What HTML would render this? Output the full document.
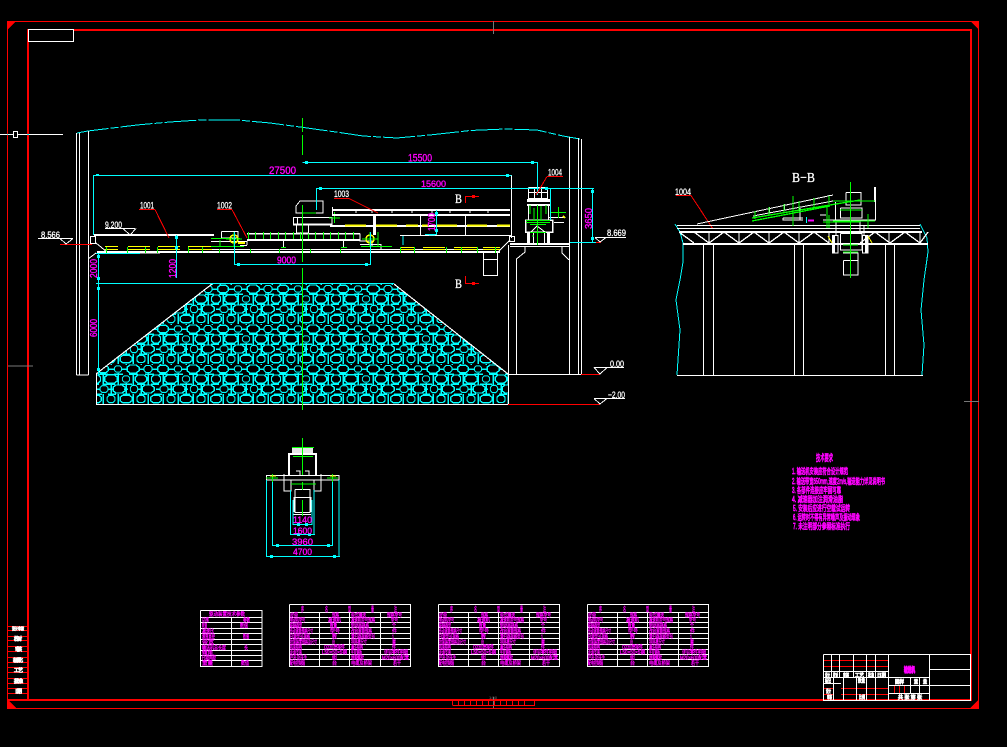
<!DOCTYPE html>
<html lang="zh"><head><meta charset="utf-8"><title>CAD</title>
<style>
html,body{margin:0;padding:0;background:#000;width:1007px;height:747px;overflow:hidden}
svg{display:block}
text{font-family:"Liberation Sans","Noto Sans CJK SC",sans-serif}
.w{stroke:#fff;fill:none}.c{stroke:#0ff;fill:none}.g{stroke:#0f0;fill:none}.y{stroke:#ff0;fill:none}.r{stroke:#f00;fill:none}
.m text,text.m{fill:#f0f;stroke:#f0f;stroke-width:.35}
.t text,text.t{fill:#fff;stroke:#fff;stroke-width:.3}
.cn text{fill:#f0f;stroke:#f0f;stroke-width:.3;font-size:5.5px}
.no text{fill:#f0f;stroke:#f0f;stroke-width:.75;font-size:8px}
.bl text{fill:#fff;stroke:#fff;stroke-width:.8;font-size:5px}
</style></head><body>
<svg width="1007" height="747" viewBox="0 0 1007 747" xmlns="http://www.w3.org/2000/svg" shape-rendering="crispEdges">
<defs>
<polygon id="o" points="-3,-4.5 3,-4.5 6,-2 6,2 3,4.5 -3,4.5 -6,2 -6,-2"/>
<pattern id="rock" x="96" y="284" width="60" height="40" patternUnits="userSpaceOnUse">
<rect width="60" height="40" fill="#000"/>
<g fill="none" stroke="#0ff" stroke-width="1.5">
<use href="#o" transform="translate(7,5) scale(.9,.85)"/><use href="#o" transform="translate(22,5) scale(.6,.7)"/>
<use href="#o" transform="translate(37,5) scale(1,.9)"/><use href="#o" transform="translate(52,5) scale(.7,.75)"/>
<use href="#o" transform="translate(0,15) scale(.75,.9)"/><use href="#o" transform="translate(60,15) scale(.75,.9)"/>
<use href="#o" transform="translate(15,15) scale(1.05,.95)"/><use href="#o" transform="translate(30,15) scale(.6,.7)"/>
<use href="#o" transform="translate(45,15) scale(.95,.9)"/>
<use href="#o" transform="translate(8,25) scale(.65,.75)"/><use href="#o" transform="translate(23,25) scale(1,.9)"/>
<use href="#o" transform="translate(38,25) scale(.6,.8)"/><use href="#o" transform="translate(52,25) scale(1,.9)"/>
<use href="#o" transform="translate(0,35) scale(.9,.85)"/><use href="#o" transform="translate(60,35) scale(.9,.85)"/>
<use href="#o" transform="translate(15,35) scale(.65,.8)"/><use href="#o" transform="translate(30,35) scale(1,.85)"/>
<use href="#o" transform="translate(45,35) scale(.7,.8)"/>
<path d="M0 5H2M12 5H19M25 5H31M44 5H48M56 5H60M3 10H12M18 10H27M33 10H42M49 10H58M8 20H19M24 20H36M41 20H49M55 20H60M0 20H3M0 30H6M12 30H20M27 30H34M43 30H51M58 30H60M7 10V21M22 9V21M37 10V21M52 9V21M15 20V30M30 19V31M45 20V30M0 25H4M12 25H18M28 25H32M42 25H47M7 30V40M22 30V40M37 30V40M52 30V40M15 0V1M30 0V1M45 0V1M4 0V1M56 0V1"/>
</g>
</pattern>
<clipPath id="pile"><polygon points="96,374 212,284 394,284 508,374 508,404 96,404"/></clipPath>
</defs>
<rect width="1007" height="747" fill="#000"/>

<!-- frame -->
<g fill="#f00" stroke="none">
<rect x="7" y="21" width="971" height="1"/><rect x="7" y="21" width="1" height="687"/><rect x="7" y="708" width="971" height="1"/><rect x="978" y="21" width="1" height="688"/>
<rect x="27" y="29" width="2" height="672"/><rect x="27" y="29" width="944" height="2"/><rect x="970" y="29" width="2" height="672"/><rect x="8" y="699" width="964" height="2"/>
<polygon points="7,21 16,21 7,30"/><polygon points="979,21 970,21 979,30"/><polygon points="7,708 7,699 16,708"/><polygon points="979,708 979,699 970,708"/>
</g>
<path class="w" style="stroke:#777" d="M493.5 21V34M8 366H33M964 401.5H979M493.5 697V708"/>
<rect x="28.5" y="29.5" width="45" height="12" stroke="#fff" fill="#000"/>
<path class="w" d="M0 134.5H63"/><rect x="13.5" y="131.5" width="4" height="6" stroke="#fff" fill="#000"/>
<path d="M7 134.5h1M27 134.5h2" class="c"/>
<path d="M452.5 700.5H535M452.5 705.5H535M452.5 700V705M458.5 700V705M464.5 700V705M470.5 700V705M476.5 700V705M482.5 700V705M488.5 700V705M494.5 700V705M500.5 700V705M506.5 700V705M512.5 700V705M518.5 700V705M524.5 700V705M534.5 700V705" class="r"/>

<!-- left strip -->
<path class="r" d="M8 626.5H27M8 630.5H27M8 636.5H27M8 640.5H27M8 646.5H27M8 651.5H27M8 657.5H27M8 662.5H27M8 667.5H27M8 672.5H27M8 678.5H27M8 683.5H27M8 688.5H27M8 693.5H27"/>
<g class="bl">
<text x="12" y="630" textLength="12" lengthAdjust="spacingAndGlyphs" style="font-size:4px">设计审核</text>
<text x="14" y="640.5" textLength="8" style="font-size:5px">校对</text>
<text x="15" y="651" textLength="7" style="font-size:5px">审核</text>
<text x="13" y="662" textLength="10" style="font-size:5px">标准化</text>
<text x="14" y="672" textLength="9" style="font-size:5px">工艺</text>
<text x="14" y="683" textLength="9" style="font-size:5px">批准</text>
<text x="15" y="693" textLength="7" style="font-size:5px">日期</text>
</g>

<!-- rock pile -->
<rect x="96" y="284" width="412" height="120" fill="url(#rock)" clip-path="url(#pile)"/>
<path class="w" d="M96 374L212 284M394 284L508 374M96 404.5H508M96.5 374V404" stroke-width="1.2"/>
<path class="c" d="M212 283.5H394"/>

<!-- building cyan wave -->
<path class="c" d="M77 133L88 131L137 125L170 122L200 120L237 120L270 123L300 127L343 133L363 136L397 138L430 135L470 130.5L505 129L537 130L563 136L580 139" stroke-width="1" stroke-dasharray="32 2 8 2"/>

<!-- building white -->
<path class="w" d="M76.5 133V375M79.5 133V375M88.5 131V375M76.5 375H88.5M569.5 137V375M578.5 138V375M581.5 139V375M508.5 245V404M508 374.5H582M525 246V252L516.5 259V374M562 246V253L569 260"/>
<rect x="510" y="243" width="60" height="2" fill="#fff"/><rect x="510" y="246" width="60" height="1" fill="#fff"/>
<path class="w" d="M483.5 253V275.5H497.5V253M483.5 259.5H497.5M497 253L510 240M96 243L107 252M96 253L88 259"/>
<rect x="509.5" y="236.5" width="5" height="5" class="w"/><rect x="90.5" y="236.5" width="5" height="7" class="w"/>
<rect x="94" y="234" width="120" height="2" fill="#fff"/>
<rect x="97" y="251" width="403" height="2" fill="#fff"/><path class="w" d="M200 249.5H500M105 253H160"/>

<!-- yellow idlers -->
<path class="y" d="M105 246.5H118M128 246.5H150M158 246.5H180M188 246.5H212M400 247.5H414M423 247.5H445M454 247.5H477M483 247.5H500" stroke-width="1"/>
<path class="y" d="M105 249.5H118M128 249.5H150M158 249.5H180M188 249.5H212M400 249.5H414M423 249.5H445M454 249.5H477M483 249.5H500" stroke-width="1"/>
<path class="g" d="M106.5 247V253M127.5 247V253M145.5 247V253M157.5 247V253M176.5 247V253M188.5 247V253M202.5 247V253M219.5 249V253M250.5 249V253M279.5 249V253M310.5 249V253M340.5 249V253M400.5 247V253M414.5 247V253M446.5 247V253M477.5 247V253M461.5 247V253M495.5 247V253"/>

<!-- lower carriage -->
<path class="w" d="M221.5 231.5H238V238H221.5V231.5M211 241.5H247V245M283.5 240V247M343.5 240V247M360 233.5V241H372V247M360 244.5H381V250M211 246.5H244M247 245.5H240"/>
<rect x="247" y="233" width="113" height="1.5" fill="#fff"/><rect x="247" y="239" width="113" height="2" fill="#fff"/>
<path class="g" d="M248.5 232V239M255.5 232V239M263.5 232V239M270.5 232V239M278.5 232V239M285.5 232V239M293.5 232V239M300.5 232V239M308.5 232V239M315.5 232V239M323.5 232V239M330.5 232V239M338.5 232V239M345.5 232V239M353.5 232V239M211 246.5H244M220 246.5V240M211 238.5H232M240 238.5H236M281 247.5H286M341 247.5H347M361 246.5H392M378 232V247"/>
<circle cx="234" cy="239" r="4" class="y" stroke-width="1.6"/><circle cx="370" cy="239" r="4" class="y" stroke-width="1.6"/>
<path class="y" d="M238 243H245" stroke-width="2"/>
<path class="g" d="M234 232V247M226 239H242M370 232V247M362 239H378"/>

<!-- upper drive -->
<path class="w" d="M296 206L300 201H323V213H296V206M293.5 217.5H332V225M297.5 217V225M330 225H293.5V217M296.5 225V233H308.5V225"/>
<rect x="293" y="223.5" width="39" height="2" fill="#fff"/>
<path class="g" d="M302 213H316M334.5 212V223M329 218H340"/>
<!-- upper conveyor -->
<rect x="332" y="209" width="178" height="2" fill="#fff"/><rect x="332" y="214" width="178" height="2" fill="#fff"/>
<path class="w" d="M400 235.5H511M420.5 215V235M465.5 215V235M511.5 175V238M332.5 207V215M356 211V213M372 211V213M392 211V213M412 211V213M432 211V213M450 211V213M470 211V213M488 211V213"/>
<rect x="330" y="225" width="180" height="2" fill="#fff"/>
<rect x="373" y="215" width="3" height="20" fill="#fff"/>
<path class="y" d="M345 225.5H366M376 225.5H397M406 225.5H418M422 225.5H428M437 225.5H457M467 225.5H487M497 225.5H510" stroke-width="2"/>

<!-- 1004 tower -->
<path class="w" d="M528.5 187.5H547.5V198.5H528.5V187.5M534.5 187V198M541.5 187V198M528 192.5H548M528.5 206V220M548.5 206V220M531 232L537 226L545 232M533.5 232V244M544.5 232V244M549 217.5H565V218M554 222.5H564"/>
<rect x="527" y="199" width="23" height="3" fill="#fff"/><rect x="527" y="204" width="23" height="2" fill="#fff"/>
<rect x="525.5" y="220" width="27" height="12" fill="none" stroke="#fff" stroke-width="1.5"/>
<rect x="527" y="232" width="3" height="12" fill="#fff"/><rect x="547" y="232" width="3" height="12" fill="#fff"/>
<path class="g" d="M537.5 205V245M526 220.5H550M526 222.5H550M530 224.5H546M530 232.5H546M533 235V237M550 212.5H566M558.5 207V218M530 205V214M546 205V214M534 208V220M541 206V220"/>
<path class="y" d="M563 216L565 218" stroke-width="2"/>

<!-- dimensions -->
<path class="c" d="M302.5 162.5H537.5M537.5 162V195M93.5 175.5H511.5M93.5 175V235M316.5 188.5H594M316.5 188V210M550.5 188V220M592.5 188V243M570 242.5H598M436.5 210V234M425 234.5H437M435 235H429M234.5 232V265M370.5 232V265M234 264.5H371M176.5 235V278M98.5 253V375M96 283.5H212M96 253.5H140M403 236V245"/>
<g fill="#0ff" stroke="none">
<rect x="305" y="161" width="3" height="3"/><rect x="531" y="161" width="3" height="3"/><rect x="96" y="174" width="3" height="2"/><rect x="506" y="174" width="3" height="3"/><rect x="319" y="187" width="3" height="3"/><rect x="545" y="187" width="3" height="3"/><rect x="591" y="190" width="3" height="3"/><rect x="591" y="237" width="3" height="3"/><rect x="435" y="212" width="3" height="3"/><rect x="435" y="229" width="3" height="3"/><rect x="237" y="263" width="3" height="3"/><rect x="365" y="263" width="3" height="3"/><rect x="175" y="236" width="3" height="3"/><rect x="175" y="246" width="3" height="3"/><rect x="97" y="255" width="3" height="3"/><rect x="97" y="277" width="3" height="3"/><rect x="97" y="287" width="3" height="3"/><rect x="97" y="368" width="3" height="3"/>
</g>
<g class="m" style="font-size:11px">
<text x="408" y="161.5" textLength="24" lengthAdjust="spacingAndGlyphs">15500</text>
<text x="269" y="174" textLength="27" lengthAdjust="spacingAndGlyphs">27500</text>
<text x="421" y="187" textLength="25" lengthAdjust="spacingAndGlyphs" font-size="9.5">15600</text>
<text x="277" y="263.5" textLength="19" lengthAdjust="spacingAndGlyphs" font-size="10">9000</text>
<text transform="translate(176,278) rotate(-90)" textLength="19" lengthAdjust="spacingAndGlyphs" font-size="10">1200</text>
<text transform="translate(97,278) rotate(-90)" textLength="19" lengthAdjust="spacingAndGlyphs" font-size="10">2000</text>
<text transform="translate(97,337) rotate(-90)" textLength="18" lengthAdjust="spacingAndGlyphs" font-size="10">6000</text>
<text transform="translate(592,229) rotate(-90)" textLength="21" lengthAdjust="spacingAndGlyphs" font-size="10">3650</text>
<text transform="translate(435,231) rotate(-90)" textLength="18" lengthAdjust="spacingAndGlyphs" font-size="10">1700</text>
</g>

<!-- center line -->
<path class="g" d="M302.5 118V132M302.5 135V155M302.5 205V262M302.5 268V410" stroke-width="1"/>

<!-- labels & leaders -->
<g class="t" style="font-size:9.5px">
<text x="140" y="208.5" textLength="14" lengthAdjust="spacingAndGlyphs">1001</text>
<text x="217" y="208.5" textLength="15" lengthAdjust="spacingAndGlyphs">1002</text>
<text x="334" y="197" textLength="15" lengthAdjust="spacingAndGlyphs">1003</text>
<text x="548" y="175.5" textLength="14" lengthAdjust="spacingAndGlyphs">1004</text>
<text x="675" y="195" textLength="16" lengthAdjust="spacingAndGlyphs">1004</text>
<text x="105" y="228" textLength="17" lengthAdjust="spacingAndGlyphs">9.200</text>
<text x="41" y="238" textLength="19" lengthAdjust="spacingAndGlyphs">8.566</text>
<text x="607" y="236" textLength="19" lengthAdjust="spacingAndGlyphs">8.669</text>
<text x="610" y="367" textLength="14" lengthAdjust="spacingAndGlyphs">0.00</text>
<text x="608" y="398" textLength="17" lengthAdjust="spacingAndGlyphs">−2.00</text>
</g>
<g class="t">
<text x="455" y="203" textLength="7" lengthAdjust="spacingAndGlyphs" style="font-family:'Liberation Serif',serif;font-size:13px">B</text>
<text x="455" y="288" textLength="7" lengthAdjust="spacingAndGlyphs" style="font-family:'Liberation Serif',serif;font-size:13px">B</text>
<text x="792" y="182" textLength="23" lengthAdjust="spacingAndGlyphs" style="font-family:'Liberation Serif',serif;font-size:14px">B−B</text>
</g>
<path class="r" d="M139 209.5H155M155 209.5L169 238M217 209.5H232M232 209.5L247 238M334 198.5H349M349 198.5L378 213M547 176.5H563M547 176.5L536 195M676 195.5H691M691 195.5L713 229M465.5 203V196.5H479M465.5 276V283.5H479M60 244.5H92M596 242.5H601M581 374.5H600M508 404.5H600"/>
<rect x="472" y="195" width="3" height="3" fill="#f00"/><rect x="472" y="282" width="3" height="3" fill="#f00"/>
<path class="w" d="M105 228.5H135M123 228.5L130 235L136 228.5M38 238.5H73M60 238.5L66 244L73 238.5M595 237.5H626M595 237.5L600 242L606 237.5M594 367.5H624M594 367.5L600 374L607 367.5M594 398.5H625M594 398.5L600 404L607 398.5"/>

<!-- B-B section -->
<path class="c" d="M675 224L680 232L683 243V262L680 280L676 300L680 330L677 375M920 224L927 238L928 252L924 280L921 310L924 345L922 375"/>
<path class="w" d="M677 375.5H923M703.5 245V375M713.5 245V375M794.5 245V375M803.5 245V375M885.5 245V375M894.5 245V375M677 225.5H920M677 228.5H920"/>
<rect x="680" y="231" width="242" height="2" fill="#fff"/><rect x="683" y="243" width="245" height="2" fill="#fff"/>
<path class="w" d="M679 232L694 243M694 232L709 243L724 232L739 243L754 232L769 243L784 232L799 243L814 232L829 243M860 243L875 232L890 243L905 232L920 243L928 232M709 232V243M739 232V243M769 232V243M799 232V243M829 232V243M889 232V243M920 232V243" stroke-width="1.3"/>
<path class="w" d="M697 224L833 195M753 216L833 201M846 192.5H861V205H846V192.5M835.5 202V220M875.5 202V220H823M840.5 208H862V218H840.5V208M783 218H803M783 218V220H803M800 208V220M820 215H826"/>
<rect x="874" y="187" width="2" height="15" fill="#fff"/>
<path class="w" d="M755 211V216M769.5 207V213M784.5 204V210M799 201V207M814 198V204M829 195V201"/>
<path class="w" d="M832.5 235.5H838V253H832.5V235.5M862.5 235.5H868V253H862.5V235.5M840.5 233.5H862V250H840.5V233.5M842 222H860V233M836 225V235M864 225V235M843.5 260.5H858V275H843.5V260.5M843 253H858V260M836 222V228"/>
<rect x="832" y="235" width="3" height="18" fill="#fff"/><rect x="865" y="235" width="3" height="18" fill="#fff"/>
<path class="y" d="M828 236L832 243M868 236L872 243"/>
<path class="g" stroke-width="1.3" d="M850.5 182V278M752 218L860 200M752 221L830 206M833 201H875M840 210H862M833 221H875M823 222H860M843 245H858M843 252H858M793 196V226M827 206V228M868 214V228M829 215V228M755 211V219M769 207V215M784 204V212M799 201V210M814 198V207M829 196V204"/>
<path d="M808 220.5H814" stroke="#f0f" stroke-width="2"/>
<path d="M806.5 217V223" class="c"/>

<!-- plan detail -->
<path class="w" d="M266 475.5H339M266 480H339M266.5 475V480M339 475V480M284 474V491H291V480M321 474V491H314V480M295 489.5H310V497.5H295V489.5M295 497.5H310V512.5H295V497.5M294 497V512M311 497V512M293 514.5H311M291 480V490M314 480V490M296 471H300V475M305 471H309V475"/>
<rect x="288" y="453" width="29" height="2" fill="#fff"/><rect x="288" y="453" width="2" height="22" fill="#fff"/><rect x="315" y="453" width="2" height="22" fill="#fff"/>
<rect x="292" y="447" width="21" height="6" fill="#fff" opacity=".9"/>
<path class="c" d="M266.5 480V557M339 480V557M266 556.5H340M272.5 480V546M332.5 480V546M272 545.5H333M290.5 490V535M314 490V535M290 534.5H315M293 500V525M312 500V525M293 524.5H312"/>
<g fill="#0ff"><rect x="270" y="555" width="3" height="3"/><rect x="333" y="555" width="3" height="3"/><rect x="276" y="544" width="3" height="3"/><rect x="327" y="544" width="3" height="3"/><rect x="297" y="533" width="3" height="3"/><rect x="308" y="533" width="3" height="3"/><rect x="297" y="523" width="3" height="3"/><rect x="305" y="523" width="3" height="3"/></g>
<path class="g" stroke-width="1.2" d="M302.5 438V475M302.5 482V490M302.5 500V516M292 447.5H314M293 456.5H313M272.5 474V482M266 478H278M332.5 474V482M327 478H338M291 484H316"/>
<path class="y" d="M270 476H276M330 476H336"/>
<g class="m" style="font-size:9.5px">
<text x="293" y="523" textLength="19" lengthAdjust="spacingAndGlyphs">1140</text>
<text x="293" y="534" textLength="19" lengthAdjust="spacingAndGlyphs">1600</text>
<text x="292" y="545" textLength="21" lengthAdjust="spacingAndGlyphs">3960</text>
<text x="293" y="555" textLength="19" lengthAdjust="spacingAndGlyphs">4700</text>
</g>

<!-- notes -->
<g class="no">
<text x="816" y="461" textLength="17" lengthAdjust="spacingAndGlyphs" style="font-size:9px">技术要求</text>
<text x="792" y="474" textLength="56" lengthAdjust="spacingAndGlyphs">1. 输送机安装应符合设计规范</text>
<text x="792" y="484" textLength="93" lengthAdjust="spacingAndGlyphs">2. 输送带宽650mm,速度2m/s,输送能力详见说明书</text>
<text x="792" y="493" textLength="49" lengthAdjust="spacingAndGlyphs">3. 各部件连接应牢固可靠</text>
<text x="792" y="502" textLength="51" lengthAdjust="spacingAndGlyphs">4. 减速器加注润滑油脂</text>
<text x="793" y="511" textLength="57" lengthAdjust="spacingAndGlyphs">5. 安装后应进行空载试运转</text>
<text x="793" y="520" textLength="67" lengthAdjust="spacingAndGlyphs">6. 运转时不得有异常噪声及振动现象</text>
<text x="793" y="529" textLength="57" lengthAdjust="spacingAndGlyphs">7. 未注明部分参照标准执行</text>
</g>

<!-- table 1 -->
<path class="w" d="M200.5 610.5H262V666.5H200.5V610.5M200 617.5H262M200 622.5H262M200 628.5H262M200 633.5H262M200 639.5H262M200 644.5H262M200 650.5H262M200 655.5H262M200 660.5H262M231.5 617V666"/>
<g class="cn">
<text x="209" y="616" textLength="36" lengthAdjust="spacingAndGlyphs">驱动装置技术参数</text>
<text x="202" y="622" textLength="7" lengthAdjust="spacingAndGlyphs">功率</text><text x="243" y="622" textLength="7" lengthAdjust="spacingAndGlyphs">参数</text>
<text x="202" y="627.5" textLength="5" lengthAdjust="spacingAndGlyphs">转速</text><text x="240" y="627.5" textLength="8" lengthAdjust="spacingAndGlyphs">数值</text>
<text x="202" y="633" textLength="12" lengthAdjust="spacingAndGlyphs">减速比</text>
<text x="202" y="638.5" textLength="13" lengthAdjust="spacingAndGlyphs">滚筒直径</text><text x="243" y="638.5" textLength="6" lengthAdjust="spacingAndGlyphs">数值</text>
<text x="202" y="644" textLength="12" lengthAdjust="spacingAndGlyphs">带宽</text>
<text x="202" y="649.5" textLength="24" lengthAdjust="spacingAndGlyphs">输送机总长度</text><text x="244" y="649.5" textLength="4" lengthAdjust="spacingAndGlyphs">长</text>
<text x="202" y="654.5" textLength="11" lengthAdjust="spacingAndGlyphs">倾角</text>
<text x="202" y="659.5" textLength="14" lengthAdjust="spacingAndGlyphs">托辊间距</text>
<text x="202" y="665" textLength="11" lengthAdjust="spacingAndGlyphs">重量</text><text x="241" y="665" textLength="8" lengthAdjust="spacingAndGlyphs">数值</text>
</g>

<!-- tables 2-4 -->
<g id="tb">
<path class="w" d="M289.5 604.5H410.5V666.5H289.5V604.5M289 612.5H411M289 617.5H411M289 622.5H411M289 627.5H411M289 633.5H411M289 638.5H411M289 644.5H411M289 649.5H411M289 654.5H411M289 659.5H411M319.5 612V666M349.5 612V666M380.5 612V666"/>
<g class="cn">
<text x="301" y="611.5" textLength="3" lengthAdjust="spacingAndGlyphs" style="font-size:7px">序</text><text x="325" y="611.5" textLength="3" lengthAdjust="spacingAndGlyphs" style="font-size:7px">名</text><text x="348" y="611.5" textLength="3" lengthAdjust="spacingAndGlyphs" style="font-size:7px">型</text><text x="371" y="611.5" textLength="3" lengthAdjust="spacingAndGlyphs" style="font-size:7px">量</text><text x="394" y="611.5" textLength="3" lengthAdjust="spacingAndGlyphs" style="font-size:7px">注</text>
<text x="290" y="617" textLength="8" lengthAdjust="spacingAndGlyphs">皮带</text><text x="332" y="617" textLength="7" lengthAdjust="spacingAndGlyphs">规格</text><text x="351" y="617" textLength="15" lengthAdjust="spacingAndGlyphs">带式输送</text><text x="387" y="617" textLength="15" lengthAdjust="spacingAndGlyphs">规格型号</text>
<text x="290" y="622" textLength="15" lengthAdjust="spacingAndGlyphs">电动机型号</text><text x="328" y="622" textLength="13" lengthAdjust="spacingAndGlyphs">减速机</text><text x="351" y="622" textLength="24" lengthAdjust="spacingAndGlyphs">减速机型号规格</text><text x="391" y="622" textLength="7" lengthAdjust="spacingAndGlyphs">型号</text>
<text x="290" y="627.5" textLength="12" lengthAdjust="spacingAndGlyphs">联轴器型</text><text x="330" y="627.5" textLength="7" lengthAdjust="spacingAndGlyphs">数量</text><text x="351" y="627.5" textLength="18" lengthAdjust="spacingAndGlyphs">制动器规格</text><text x="392" y="627.5" textLength="4" lengthAdjust="spacingAndGlyphs">个</text>
<text x="290" y="633" textLength="23" lengthAdjust="spacingAndGlyphs">传动滚筒规格尺寸</text><text x="330" y="633" textLength="10" lengthAdjust="spacingAndGlyphs">型号</text><text x="351" y="633" textLength="21" lengthAdjust="spacingAndGlyphs">改向滚筒规格</text><text x="392" y="633" textLength="5" lengthAdjust="spacingAndGlyphs">件</text>
<text x="290" y="638.5" textLength="20" lengthAdjust="spacingAndGlyphs">托辊型号规格</text><text x="332" y="638.5" textLength="5" lengthAdjust="spacingAndGlyphs">数</text><text x="351" y="638.5" textLength="24" lengthAdjust="spacingAndGlyphs">清扫器规格型号</text><text x="392" y="638.5" textLength="2" lengthAdjust="spacingAndGlyphs">1</text>
<text x="290" y="644" textLength="27" lengthAdjust="spacingAndGlyphs">拉紧装置规格及尺寸</text><text x="332" y="644" textLength="3" lengthAdjust="spacingAndGlyphs">台</text><text x="351" y="644" textLength="16" lengthAdjust="spacingAndGlyphs">导料槽尺寸</text><text x="392" y="644" textLength="4" lengthAdjust="spacingAndGlyphs">套</text>
<text x="290" y="649" textLength="12" lengthAdjust="spacingAndGlyphs">机架结构</text><text x="324" y="649" textLength="21" lengthAdjust="spacingAndGlyphs">Q235焊接件</text><text x="351" y="649" textLength="12" lengthAdjust="spacingAndGlyphs">漏斗结构</text><text x="392" y="649" textLength="4" lengthAdjust="spacingAndGlyphs">件</text>
<text x="290" y="654" textLength="12" lengthAdjust="spacingAndGlyphs">走道支架</text><text x="322" y="654" textLength="25" lengthAdjust="spacingAndGlyphs">L50×50×5钢</text><text x="351" y="654" textLength="11" lengthAdjust="spacingAndGlyphs">平台钢板</text><text x="384" y="654" textLength="24" lengthAdjust="spacingAndGlyphs">详见零件明细</text>
<text x="290" y="659.5" textLength="17" lengthAdjust="spacingAndGlyphs">栏杆及扶手</text><text x="332" y="659.5" textLength="5" lengthAdjust="spacingAndGlyphs">组</text><text x="351" y="659.5" textLength="13" lengthAdjust="spacingAndGlyphs">地脚螺栓</text><text x="382" y="659.5" textLength="27" lengthAdjust="spacingAndGlyphs">M20×600配套</text>
<text x="290" y="665" textLength="15" lengthAdjust="spacingAndGlyphs">配电控制箱</text><text x="332" y="665" textLength="5" lengthAdjust="spacingAndGlyphs">台</text><text x="351" y="665" textLength="21" lengthAdjust="spacingAndGlyphs">电缆及桥架</text><text x="393" y="665" textLength="8" lengthAdjust="spacingAndGlyphs">若干</text>
</g>
</g>
<use href="#tb" x="149"/>
<use href="#tb" x="298"/>

<!-- title block -->
<path class="r" d="M823 660.5H888M823 666.5H888M841 688.5H888M841 694.5H888M823 688.5H833M823 694.5H833M894.5 685V693M899.5 685V693M904.5 685V693"/>
<path class="w" d="M823.5 654.5H970.5V700.5H823.5V654.5M929.5 669.5H970.5M929.5 685.5H970.5M831.5 654V677M839.5 654V677M853.5 654V677M866.5 654V700M875.5 654V700M888.5 654V700M929.5 654V700M823 671.5H888M823 677.5H929M823 683.5H841M833.5 677V700M843.5 677V700M856.5 677V700M888 685.5H929M888 693.5H929M910.5 677V693M919.5 677V693"/>
<g class="bl">
<text x="825" y="677" textLength="5" lengthAdjust="spacingAndGlyphs">设计</text><text x="833" y="677" textLength="5" lengthAdjust="spacingAndGlyphs">校对</text><text x="843" y="677" textLength="6" lengthAdjust="spacingAndGlyphs">审核</text><text x="855" y="677" textLength="9" lengthAdjust="spacingAndGlyphs">工艺</text><text x="868" y="677" textLength="6" lengthAdjust="spacingAndGlyphs">批准</text><text x="877" y="677" textLength="9" lengthAdjust="spacingAndGlyphs">日期</text>
<text x="825" y="682.5" textLength="6" lengthAdjust="spacingAndGlyphs">标记</text><text x="858" y="682.5" textLength="7" lengthAdjust="spacingAndGlyphs">数量</text>
<text x="826" y="693" textLength="5" lengthAdjust="spacingAndGlyphs">设计</text><text x="827" y="699" textLength="5" lengthAdjust="spacingAndGlyphs">审核</text><text x="859" y="699" textLength="6" lengthAdjust="spacingAndGlyphs">比例</text>
<text x="895" y="683.5" textLength="9" lengthAdjust="spacingAndGlyphs">图样</text><text x="914" y="683.5" textLength="4" lengthAdjust="spacingAndGlyphs">重</text><text x="923" y="683.5" textLength="4" lengthAdjust="spacingAndGlyphs">量</text>
<text x="898" y="699" textLength="24">共张第张</text>
</g>
<text x="904" y="672" textLength="11" lengthAdjust="spacingAndGlyphs" fill="#f0f" stroke="#f0f" stroke-width="1.3" style="font-size:7px">输送机</text>

<text x="489" y="699" fill="#777" textLength="8" lengthAdjust="spacingAndGlyphs" style="font-size:4px">1:50</text>
</svg>
</body></html>
